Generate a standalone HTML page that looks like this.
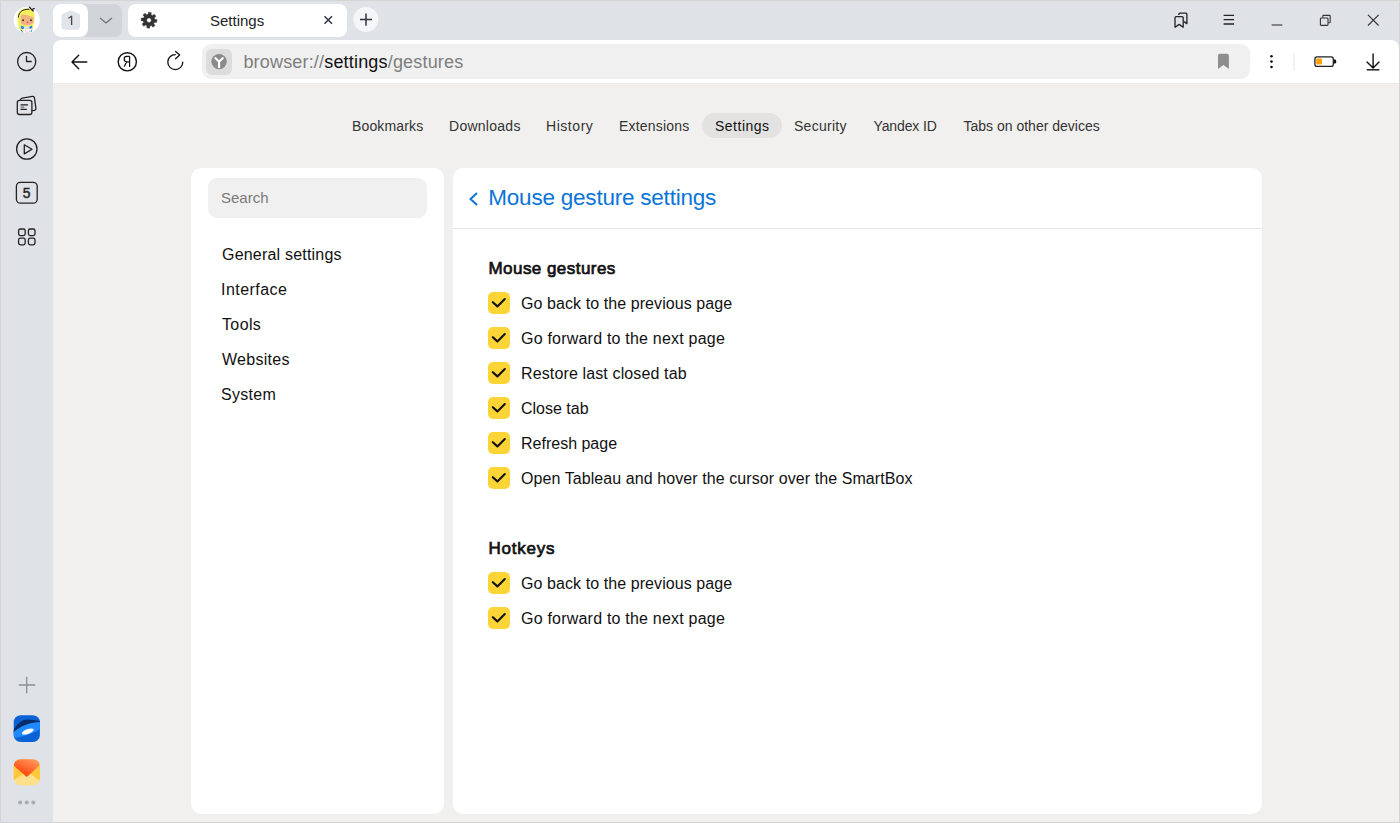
<!DOCTYPE html>
<html><head><meta charset="utf-8">
<style>
*{margin:0;padding:0;box-sizing:border-box}
html,body{width:1400px;height:823px;overflow:hidden}
body{position:relative;background:#dfe2e7;font-family:"Liberation Sans",sans-serif;color:#000}
.a{position:absolute}
.t{position:absolute;white-space:nowrap;line-height:1}
svg{position:absolute;overflow:visible}
.nav{font-size:14px;color:#333;top:119px}
.side{font-size:16px;color:#111;left:222px}
.lbl{font-size:16px;color:#111;left:521px}
.cb{position:absolute;left:488px;width:22px;height:22px;background:#fdd435;border-radius:5px}
.cb svg{left:0;top:0}
.hdr{font-size:17px;color:#111;left:488.5px;-webkit-text-stroke:0.7px #111}
</style></head>
<body>
<!-- frame borders -->
<div class="a" style="left:0;top:0;width:1400px;height:1px;background:#d4d4d4"></div>
<div class="a" style="left:0;top:0;width:1px;height:823px;background:#d4d4d4"></div>
<div class="a" style="right:0;top:0;width:1px;height:823px;background:#d4d4d4"></div>
<div class="a" style="left:0;bottom:0;width:1400px;height:1px;background:#d4d4d4"></div>

<!-- ========== TAB BAR ========== -->
<!-- avatar -->
<svg style="left:0;top:0" width="54" height="40" viewBox="0 0 54 40">
  <circle cx="26.7" cy="19.9" r="13.1" fill="#fff"/>
  <path d="M21 32 C18 28 17.2 22 17.6 16 C18 11 22 8.3 27 8.5 C31.5 8.7 34.6 11.5 34.6 16 C34.6 21 34 25 32.5 29 L29 28 L24 28 Z" fill="#f4ef5e"/>
  <path d="M20.6 16 C21.5 14.6 23 14.2 24.5 14.6 C27.5 15.4 31 16.4 33.6 17 L33.6 22 C33.2 24 31 25.2 27 25.2 C23 25.2 20.8 24 20.6 22 Z" fill="#f2b383"/>
  <path d="M18.4 17.5 C18.6 12 22.5 9 29.5 9.2" fill="none" stroke="#1d1d1d" stroke-width="1"/>
  <path d="M29.6 7.2 L31.6 9.6 L34.2 8.6 M31.6 9.6 L33.2 11" fill="none" stroke="#1d1d1d" stroke-width="1.3" stroke-linecap="round"/>
  <ellipse cx="23.1" cy="20.3" rx="0.8" ry="1" fill="#111"/>
  <ellipse cx="31" cy="20.3" rx="0.8" ry="1" fill="#111"/>
  <circle cx="22" cy="22.2" r="1" fill="#f59aa4" opacity="0.8"/>
  <circle cx="31.8" cy="22.2" r="1" fill="#f59aa4" opacity="0.8"/>
  <ellipse cx="27.6" cy="22.4" rx="0.9" ry="0.8" fill="#e8457a"/>
  <path d="M21 25.6 L24.6 27 L23.4 29.2 L20.8 28.4 Z M32 25.4 L28.8 27 L29.8 29 L32.2 28.2 Z" fill="#2a86ee"/>
  <path d="M24.2 26.6 L29 26.6 L29.4 28.4 L24 28.4 Z" fill="#cfe6ff"/>
  <path d="M25.2 28.6 L30 28.6 L29.4 32.2 L25.6 32.2 Z" fill="#fff" stroke="#f3b08c" stroke-width="0.6"/>
  <path d="M21.2 30 L22.6 32.4 M32 29.8 L31 32" stroke="#2a86ee" stroke-width="1"/>
  <path d="M16.5 27.5 C17.5 28.5 18 28 18.8 29" stroke="#e6e09a" stroke-width="0.8" fill="none"/>
</svg>

<!-- tab group 1 -->
<div class="a" style="left:53px;top:4px;width:69px;height:33px;background:#d1d4d9;border-radius:8px"></div>
<div class="a" style="left:53px;top:4px;width:35px;height:33px;background:#fff;border-radius:8px"></div>
<svg style="left:0;top:0" width="130" height="40" viewBox="0 0 130 40">
  <path d="M62.3 14.8 L70.75 11.3 L79.2 14.8 L79.2 26.5 Q79.2 29 76.7 29 L64.8 29 Q62.3 29 62.3 26.5 Z" fill="#e1e4e9" stroke="#e1e4e9" stroke-width="1.6" stroke-linejoin="round"/>
  <path d="M68.4 18.2 L71.6 16.2 L71.6 25" fill="none" stroke="#4a4a4a" stroke-width="1.35" stroke-linejoin="round"/>
  <path d="M100 18 L106 23 L112 18" fill="none" stroke="#6f7378" stroke-width="1.3"/>
</svg>

<!-- settings tab -->
<div class="a" style="left:128px;top:4px;width:219px;height:33px;background:#fff;border-radius:8px"></div>
<svg style="left:0;top:0" width="400" height="40" viewBox="0 0 400 40">
  <path fill-rule="evenodd" fill="#333" stroke="#333" stroke-width="0.4" stroke-linejoin="round" d="M148.08 14.37 L148.44 12.22 L151.21 12.51 L151.11 14.69 L152.47 15.43 L154.25 14.16 L156.00 16.32 L154.39 17.80 L154.83 19.28 L156.98 19.64 L156.69 22.41 L154.51 22.31 L153.77 23.67 L155.04 25.45 L152.88 27.20 L151.40 25.59 L149.92 26.03 L149.56 28.18 L146.79 27.89 L146.89 25.71 L145.53 24.97 L143.75 26.24 L142.00 24.08 L143.61 22.60 L143.17 21.12 L141.02 20.76 L141.31 17.99 L143.49 18.09 L144.23 16.73 L142.96 14.95 L145.12 13.20 L146.60 14.81 Z M151.30 20.20 A2.30 2.30 0 1 0 146.70 20.20 A2.30 2.30 0 1 0 151.30 20.20 Z"/>
  <path d="M324.5 16.2 L332 23.8 M332 16.2 L324.5 23.8" stroke="#2f3640" stroke-width="1.5"/>
  <circle cx="365.9" cy="19.4" r="12.5" fill="#f5f6f7"/>
  <path d="M360 19.6 L372 19.6 M366 13.5 L366 25.7" stroke="#2f3640" stroke-width="1.5"/>
</svg>
<div class="t" style="left:210px;top:12.6px;font-size:15px;color:#222">Settings</div>

<!-- window controls -->
<svg style="left:0;top:0" width="1400" height="40" viewBox="0 0 1400 40">
  <g fill="none" stroke="#222" stroke-width="1.3" stroke-linejoin="round">
    <path d="M1178.8 15 L1178.8 14.3 Q1178.8 13.2 1180 13.2 L1185.8 13.2 Q1186.9 13.2 1186.9 14.3 L1186.9 23.6 L1184 21.6"/>
    <path d="M1175 27.2 L1175 17.8 Q1175 16.6 1176.2 16.6 L1182 16.6 Q1183.2 16.6 1183.2 17.8 L1183.2 27.2 L1179.1 24.4 Z"/>
    <path d="M1223.6 15.3 L1234.1 15.3 M1223.6 19.6 L1234.1 19.6 M1223.6 24 L1234.1 24"/>
  </g>
  <g fill="none" stroke="#333" stroke-width="1.1">
    <path d="M1271.6 25 L1282.3 25"/>
    <rect x="1320.4" y="18" width="7.6" height="7.4" rx="0.8"/>
    <path d="M1322.8 17.8 L1322.8 16.2 Q1322.8 15.4 1323.6 15.4 L1329.4 15.4 Q1330.2 15.4 1330.2 16.2 L1330.2 22 Q1330.2 22.8 1329.4 22.8 L1328.2 22.8"/>
    <path d="M1368 14.8 L1378.6 25.5 M1378.6 14.8 L1368 25.5"/>
  </g>
</svg>

<!-- ========== TOOLBAR ========== -->
<div class="a" style="left:53px;top:40px;width:1346px;height:43px;background:#fff;border-radius:8px 8px 0 0"></div>
<div class="a" style="left:53px;top:83px;width:1346px;height:739px;background:#f1f0ee"></div>
<div class="a" style="left:53px;top:83px;width:1346px;height:1px;background:#ebebe9"></div>

<div class="a" style="left:202px;top:44px;width:1048px;height:35px;background:#f0f0f0;border-radius:9px"></div>
<div class="a" style="left:206px;top:48.5px;width:26px;height:26px;background:#dcdcdc;border-radius:6px"></div>

<svg style="left:0;top:0" width="1400" height="90" viewBox="0 0 1400 90">
  <g fill="none" stroke="#111" stroke-width="1.4" stroke-linecap="round" stroke-linejoin="round">
    <path d="M72 62 L86.8 62 M78.7 55.3 L72 62 L78.7 68.7"/>
    <circle cx="127.3" cy="61.8" r="9.1"/>
    <path d="M175.3 54.6 A7.5 7.5 0 1 0 182.8 62.1" stroke-width="1.3"/>
    <path d="M175.6 51.4 L179.7 55 L175.6 58.7" stroke-width="1.3"/>
    <path d="M1367 62 L1373.1 68 L1379 62 M1373.1 54 L1373.1 67.5"/>
    <path d="M1366.8 69.8 L1379.4 69.8" stroke-linecap="butt"/>
  </g>
  <g fill="none" stroke="#111" stroke-width="1.2">
    <path d="M129.6 56.2 L129.6 67 M129.6 56.4 L126.6 56.4 Q124.2 56.4 124.2 59.1 Q124.2 61.8 126.6 61.8 L129.6 61.8 M126.8 61.8 L124.2 66.6"/>
  </g>
  <circle cx="219.1" cy="61.6" r="7.7" fill="#8a8a8a"/>
  <path d="M214.8 57.6 L219.1 61.8 L223.4 57.6 M219.1 61.8 L219.1 68" fill="none" stroke="#fff" stroke-width="2.1"/>
  <path d="M1218 55.5 Q1218 53.8 1219.7 53.8 L1227.2 53.8 Q1228.9 53.8 1228.9 55.5 L1228.9 68.9 L1223.45 65 L1218 68.9 Z" fill="#8e8e8e"/>
  <circle cx="1271.5" cy="56.2" r="1.3" fill="#111"/>
  <circle cx="1271.5" cy="61.6" r="1.3" fill="#111"/>
  <circle cx="1271.5" cy="67" r="1.3" fill="#111"/>
  <rect x="1293.3" y="53" width="1.2" height="17.5" fill="#ececec"/>
  <rect x="1314.9" y="56.8" width="18.4" height="9.6" rx="2.2" fill="none" stroke="#222" stroke-width="1.3"/>
  <path d="M1333.9 59.6 L1334.8 59.6 Q1336.2 59.6 1336.2 61 L1336.2 62.2 Q1336.2 63.6 1334.8 63.6 L1333.9 63.6 Z" fill="#111"/>
  <rect x="1316.2" y="58.5" width="5.8" height="6.1" rx="1" fill="#ffa000"/>
</svg>
<div class="t" style="left:243.4px;top:53px;font-size:18px;color:#7d7d7d;letter-spacing:0.18px">browser://<span style="color:#111">settings</span>/gestures</div>

<!-- ========== SIDEBAR ========== -->
<svg style="left:0;top:0" width="54" height="823" viewBox="0 0 54 823">
  <g fill="none" stroke="#222" stroke-width="1.3" stroke-linecap="round" stroke-linejoin="round">
    <circle cx="26.7" cy="61.6" r="9.1"/>
    <path d="M26.5 56.4 L26.5 61.5 L31.2 61.5"/>
    <path d="M20.5 99.8 Q20.7 98.4 22.1 98.2 L32.6 96.4 Q34.1 96.2 34.4 97.7 L35.9 108.3 Q36.1 109.9 34.6 110.3 L32 110.7"/>
    <rect x="17.3" y="100.4" width="14.6" height="14.1" rx="2.2"/>
    <circle cx="26.8" cy="149" r="10.2"/>
    <path d="M24.3 144.8 L32 149.3 L24.3 153.9 Z"/>
    <rect x="16.4" y="182.4" width="20.8" height="20.8" rx="4"/>
    <rect x="18.6" y="229" width="6.6" height="6.6" rx="1.8"/>
    <rect x="28.4" y="229" width="6.6" height="6.6" rx="1.8"/>
    <rect x="18.6" y="238.2" width="6.6" height="6.6" rx="1.8"/>
    <rect x="28.4" y="238.2" width="6.6" height="6.6" rx="1.8"/>
  </g>
  <g stroke="#222" stroke-width="1.3">
    <path d="M20.5 104.8 L28 104.8 M20.5 109.3 L26.8 109.3"/>
    <path d="M20.5 107.1 L24.3 107.1" stroke-width="1" stroke="#555"/>
  </g>
  <g stroke="#8b8f95" stroke-width="1.3">
    <path d="M18.8 685 L35.2 685 M26.7 676.8 L26.7 693.2"/>
  </g>
  <defs>
    <linearGradient id="mailtop" x1="0.3" y1="1" x2="1" y2="0">
      <stop offset="0" stop-color="#ff3a00"/><stop offset="1" stop-color="#ffa466"/>
    </linearGradient>
    <clipPath id="c1"><rect x="13.7" y="715.2" width="26.2" height="26.8" rx="7"/></clipPath>
    <clipPath id="c2"><rect x="13.7" y="759.2" width="26.2" height="26.2" rx="7"/></clipPath>
  </defs>
  <g clip-path="url(#c1)">
    <rect x="13" y="715" width="28" height="28" fill="#0b62d6"/>
    <path d="M12 733 C16 725 21 719.5 27.5 719.5 C32 719.5 36 720.8 42 721.2 L42 723 C32 722.5 22 725 12 734 Z" fill="#072e6c"/>
    <path d="M12 733.5 C21 725 32 722 42 722 L42 728 C34 733 24 737 12 738 Z" fill="#1f89ff"/>
    <ellipse cx="27.8" cy="731.5" rx="6.3" ry="2.3" transform="rotate(-21 27.8 731.5)" fill="#fff"/>
  </g>
  <g clip-path="url(#c2)">
    <rect x="13" y="759" width="28" height="28" fill="#ffe08a"/>
    <path d="M13 765 L26.8 776 L40 765 L40 781 L26.8 771 L13 781 Z" fill="#ffc83a"/>
    <path d="M13 759 L40 759 L40 765 L26.8 777 L13 765 Z" fill="url(#mailtop)"/>
  </g>
  <circle cx="20.1" cy="802.6" r="2" fill="#a9acb0"/>
  <circle cx="26.75" cy="802.6" r="2" fill="#a9acb0"/>
  <circle cx="33.3" cy="802.6" r="2" fill="#a9acb0"/>
</svg>
<div class="t" style="left:22.8px;top:186.6px;font-size:13.8px;color:#222;-webkit-text-stroke:0.4px #222">5</div>

<!-- ========== NAV ========== -->
<div class="a" style="left:702px;top:113px;width:80px;height:25px;background:#e3e2e0;border-radius:13px"></div>
<div class="t nav" style="left:352px;letter-spacing:0.15px">Bookmarks</div>
<div class="t nav" style="left:449px;letter-spacing:0.27px">Downloads</div>
<div class="t nav" style="left:546px;letter-spacing:0.55px">History</div>
<div class="t nav" style="left:619px;letter-spacing:0.2px">Extensions</div>
<div class="t nav" style="left:715px;color:#111;letter-spacing:0.5px">Settings</div>
<div class="t nav" style="left:794px;letter-spacing:0.28px">Security</div>
<div class="t nav" style="left:873.5px;letter-spacing:-0.12px">Yandex ID</div>
<div class="t nav" style="left:963.5px">Tabs on other devices</div>

<!-- ========== PANELS ========== -->
<div class="a" style="left:191px;top:168px;width:253px;height:646px;background:#fff;border-radius:10px"></div>
<div class="a" style="left:453px;top:168px;width:809px;height:646px;background:#fff;border-radius:10px"></div>
<div class="a" style="left:453px;top:228px;width:809px;height:1px;background:#e6e6e6"></div>
<div class="a" style="left:208px;top:178px;width:219px;height:40px;background:#f0f0f0;border-radius:9px"></div>
<div class="t" style="left:221px;top:189.7px;font-size:15px;color:#7a7a7a">Search</div>

<div class="t side" style="top:246.8px;letter-spacing:0.2px">General settings</div>
<div class="t side" style="top:281.8px;letter-spacing:0.45px;left:221px">Interface</div>
<div class="t side" style="top:316.8px;letter-spacing:0.37px">Tools</div>
<div class="t side" style="top:351.8px;letter-spacing:0.27px">Websites</div>
<div class="t side" style="top:386.8px;letter-spacing:0.3px;left:221px">System</div>

<svg style="left:0;top:0" width="500" height="220" viewBox="0 0 500 220">
  <path d="M477 193 L470.5 199 L477 205" fill="none" stroke="#0b74d8" stroke-width="2"/>
</svg>
<div class="t" style="left:488.3px;top:186.8px;font-size:22.5px;color:#0b74d8;letter-spacing:-0.22px">Mouse gesture settings</div>

<div class="t hdr" style="top:260px;letter-spacing:0.45px">Mouse gestures</div>
<div class="cb" style="top:292px"><svg width="22" height="22"><path d="M4.8 10.2 L9.4 14.4 L16.8 7.1" fill="none" stroke="#111" stroke-width="2.1" stroke-linecap="round" stroke-linejoin="round"/></svg></div>
<div class="t lbl" style="top:295.5px;letter-spacing:0.08px">Go back to the previous page</div>
<div class="cb" style="top:327px"><svg width="22" height="22"><path d="M4.8 10.2 L9.4 14.4 L16.8 7.1" fill="none" stroke="#111" stroke-width="2.1" stroke-linecap="round" stroke-linejoin="round"/></svg></div>
<div class="t lbl" style="top:330.5px;letter-spacing:0.21px">Go forward to the next page</div>
<div class="cb" style="top:362px"><svg width="22" height="22"><path d="M4.8 10.2 L9.4 14.4 L16.8 7.1" fill="none" stroke="#111" stroke-width="2.1" stroke-linecap="round" stroke-linejoin="round"/></svg></div>
<div class="t lbl" style="top:365.5px;letter-spacing:0.13px">Restore last closed tab</div>
<div class="cb" style="top:397px"><svg width="22" height="22"><path d="M4.8 10.2 L9.4 14.4 L16.8 7.1" fill="none" stroke="#111" stroke-width="2.1" stroke-linecap="round" stroke-linejoin="round"/></svg></div>
<div class="t lbl" style="top:400.5px">Close tab</div>
<div class="cb" style="top:432px"><svg width="22" height="22"><path d="M4.8 10.2 L9.4 14.4 L16.8 7.1" fill="none" stroke="#111" stroke-width="2.1" stroke-linecap="round" stroke-linejoin="round"/></svg></div>
<div class="t lbl" style="top:435.5px">Refresh page</div>
<div class="cb" style="top:467px"><svg width="22" height="22"><path d="M4.8 10.2 L9.4 14.4 L16.8 7.1" fill="none" stroke="#111" stroke-width="2.1" stroke-linecap="round" stroke-linejoin="round"/></svg></div>
<div class="t lbl" style="top:470.5px;letter-spacing:0.08px">Open Tableau and hover the cursor over the SmartBox</div>

<div class="t hdr" style="top:540px;letter-spacing:0.75px">Hotkeys</div>
<div class="cb" style="top:572px"><svg width="22" height="22"><path d="M4.8 10.2 L9.4 14.4 L16.8 7.1" fill="none" stroke="#111" stroke-width="2.1" stroke-linecap="round" stroke-linejoin="round"/></svg></div>
<div class="t lbl" style="top:575.5px;letter-spacing:0.08px">Go back to the previous page</div>
<div class="cb" style="top:607px"><svg width="22" height="22"><path d="M4.8 10.2 L9.4 14.4 L16.8 7.1" fill="none" stroke="#111" stroke-width="2.1" stroke-linecap="round" stroke-linejoin="round"/></svg></div>
<div class="t lbl" style="top:610.5px;letter-spacing:0.21px">Go forward to the next page</div>

</body></html>
